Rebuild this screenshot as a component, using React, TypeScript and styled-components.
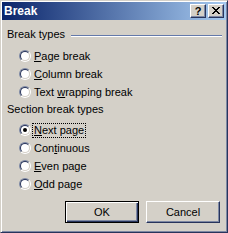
import * as React from 'react';
import styled, { createGlobalStyle } from 'styled-components';

const face = '#D4D0C8';
const shadow = '#7d88a4';
const dark = '#27345c';

const Global = createGlobalStyle`
  html, body { margin: 0; padding: 0; background: ${face}; }
  body { font-family: "Liberation Sans", Arial, sans-serif; font-size: 11px; color: #000; }
`;

const Window = styled.div`
  width: 228px;
  height: 233px;
  box-sizing: border-box;
  background: ${face};
  border: 1px solid;
  border-color: ${face} ${dark} ${dark} ${face};
  box-shadow: inset 1px 1px #fff, inset -1px -1px ${shadow};
  padding: 1px;
  display: flex;
  flex-direction: column;
`;

const TitleBar = styled.div`
  height: 18px;
  display: flex;
  align-items: center;
  padding: 0 2px 0 2px;
  background: linear-gradient(to right, #0a246a, #a6caf0);
`;

const Title = styled.div`
  flex: 1;
  color: #fff;
  font-weight: bold;
  font-size: 12px;
  line-height: 14px;
`;

const CaptionButtons = styled.div`
  display: flex;
  gap: 2px;
`;

const CaptionButton = styled.div`
  width: 16px;
  height: 14px;
  box-sizing: border-box;
  background: ${face};
  border: 1px solid;
  border-color: #fff ${dark} ${dark} #fff;
  box-shadow: inset -1px -1px ${shadow};
  display: flex;
  align-items: center;
  justify-content: center;
  font-weight: bold;
  font-size: 11px;
  line-height: 12px;
  padding-bottom: 1px;
`;

const Body = styled.div`
  display: flex;
  flex-direction: column;
  padding: 8px 4px 0 5px;
`;

const Header = styled.div<{ $gap?: number }>`
  display: flex;
  height: 13px;
  line-height: 13px;
  margin-top: ${p => p.$gap ?? 0}px;
`;

const Rule = styled.div`
  flex: 1;
  margin: 7px 0 0 6px;
  height: 0;
  border-top: 1px solid #6479aa;
  border-bottom: 1px solid #fff;
`;

const RadioList = styled.div<{ $gap: number }>`
  display: flex;
  flex-direction: column;
  padding-left: 12px;
  margin-top: ${p => p.$gap}px;
`;

const Row = styled.div`
  height: 18px;
  display: flex;
  align-items: center;
`;

const Circle = styled.span`
  width: 12px;
  height: 12px;
  flex: none;
  box-sizing: border-box;
  border-radius: 50%;
  border: 1px solid;
  border-color: ${shadow} #fff #fff ${shadow};
  display: flex;
`;

const InnerCircle = styled.span`
  width: 10px;
  height: 10px;
  box-sizing: border-box;
  border-radius: 50%;
  border: 1px solid;
  border-color: ${dark} ${face} ${face} ${dark};
  background: #fff;
  display: flex;
  align-items: center;
  justify-content: center;
`;

const Dot = styled.span`
  width: 4px;
  height: 4px;
  border-radius: 50%;
  background: #000;
`;

const Label = styled.span<{ $focus?: boolean }>`
  margin-left: 1px;
  padding: 0 1px;
  line-height: 13px;
  border: 1px dotted ${p => (p.$focus ? '#000' : 'transparent')};
  u { text-decoration: underline; text-underline-offset: 1px; }
`;

const ButtonRow = styled.div`
  display: flex;
  justify-content: flex-end;
  gap: 7px;
  padding-right: 2px;
  margin-top: 8px;
`;

const Button = styled.div<{ $default?: boolean }>`
  width: 74px;
  height: 22px;
  box-sizing: border-box;
  background: ${face};
  display: flex;
  align-items: center;
  justify-content: center;
  border: 1px solid;
  border-color: ${p => (p.$default ? '#000' : `#fff ${dark} ${dark} #fff`)};
  box-shadow: ${p =>
    p.$default
      ? `inset 1px 1px #fff, inset -1px -1px ${dark}, inset -2px -2px ${shadow}`
      : `inset -1px -1px ${shadow}`};
`;

const CloseGlyph = () => (
  <svg width="8" height="7" viewBox="0 0 8 7">
    <path
      fill="#000"
      d="M0 0h2v1h-2zM6 0h2v1h-2zM1 1h2v1h-2zM5 1h2v1h-2zM2 2h4v1h-4zM3 3h2v1h-2zM2 4h4v1h-4zM1 5h2v1h-2zM5 5h2v1h-2zM0 6h2v1h-2zM6 6h2v1h-2z"
    />
  </svg>
);

type Opt = { pre: string; key: string; post: string; checked?: boolean };

const breakTypes: Opt[] = [
  { pre: '', key: 'P', post: 'age break' },
  { pre: '', key: 'C', post: 'olumn break' },
  { pre: 'Text ', key: 'w', post: 'rapping break' },
];

const sectionTypes: Opt[] = [
  { pre: '', key: 'N', post: 'ext page', checked: true },
  { pre: 'Con', key: 't', post: 'inuous' },
  { pre: '', key: 'E', post: 'ven page' },
  { pre: '', key: 'O', post: 'dd page' },
];

const Radio = ({ opt }: { opt: Opt }) => (
  <Row>
    <Circle>
      <InnerCircle>{opt.checked && <Dot />}</InnerCircle>
    </Circle>
    <Label $focus={opt.checked}>
      {opt.pre}
      <u>{opt.key}</u>
      {opt.post}
    </Label>
  </Row>
);

export default function App() {
  return (
    <>
      <Global />
      <Window>
        <TitleBar>
          <Title>Break</Title>
          <CaptionButtons>
            <CaptionButton>?</CaptionButton>
            <CaptionButton>
              <CloseGlyph />
            </CaptionButton>
          </CaptionButtons>
        </TitleBar>
        <Body>
          <Header>
            Break types
            <Rule />
          </Header>
          <RadioList $gap={6}>
            {breakTypes.map(o => (
              <Radio key={o.post} opt={o} />
            ))}
          </RadioList>
          <Header $gap={2}>Section break types</Header>
          <RadioList $gap={5}>
            {sectionTypes.map(o => (
              <Radio key={o.post} opt={o} />
            ))}
          </RadioList>
          <ButtonRow>
            <Button $default>OK</Button>
            <Button>Cancel</Button>
          </ButtonRow>
        </Body>
      </Window>
    </>
  );
}
